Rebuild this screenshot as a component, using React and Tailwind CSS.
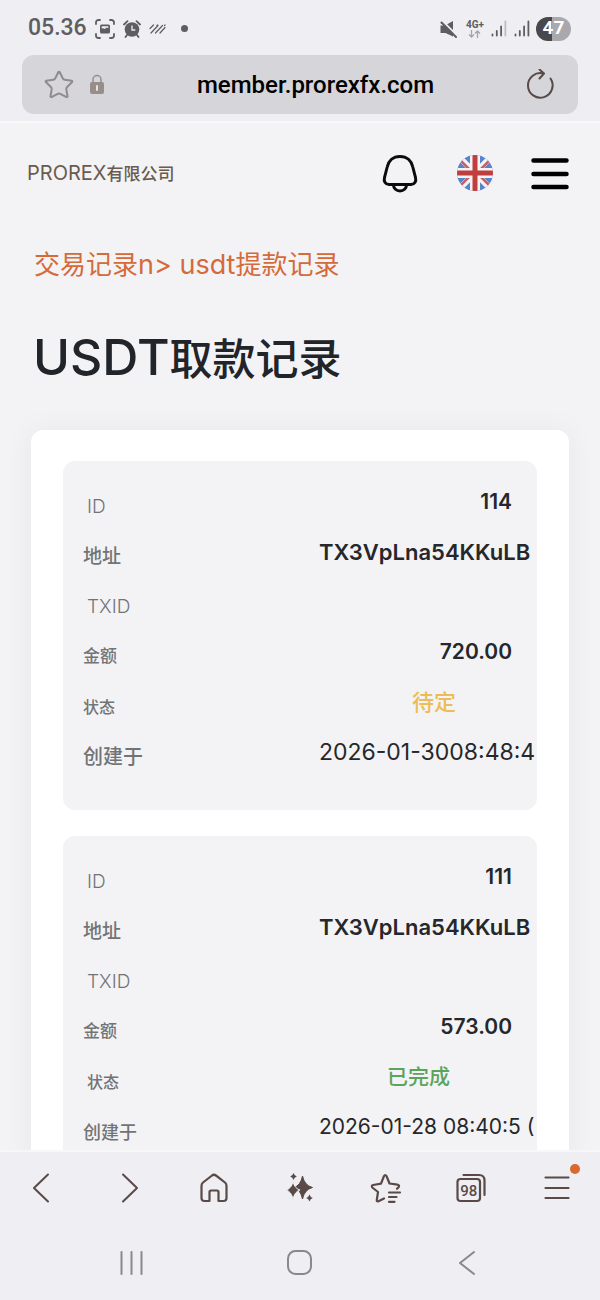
import React from 'react';
import { Star } from 'lucide-react';

const records = [
    {
        rows: [
            { label: 'ID', value: '114', type: 'latin' },
            { label: '地址', value: 'TX3VpLna54KKuLB', labelClass: 'text-[19px]', valueClass: 'text-[22px] font-semibold text-[#26272b]' },
            { label: 'TXID', value: '', type: 'latin' },
            { label: '金额', value: '720.00', labelClass: 'text-[17px]' },
            { label: '状态', value: '待定', labelClass: 'text-base', valueClass: 'pr-14 text-[22px] font-medium text-[#ecbd57]' },
            { label: '创建于', value: '2026-01-3008:48:4', labelClass: 'text-xl', valueClass: 'text-[23px] text-[#26272b]' },
        ],
    },
    {
        rows: [
            { label: 'ID', value: '111', type: 'latin' },
            { label: '地址', value: 'TX3VpLna54KKuLB', labelClass: 'text-[19px]', valueClass: 'text-[22px] font-semibold text-[#26272b]' },
            { label: 'TXID', value: '', type: 'latin' },
            { label: '金额', value: '573.00', labelClass: 'text-[17px]' },
            { label: '状态', value: '已完成', labelClass: 'pl-1 text-base', valueClass: 'pr-[62px] text-[21px] font-medium text-[#5ba45c]' },
            { label: '创建于', value: '2026-01-28 08:40:5 (', labelClass: 'text-[18px]', valueClass: 'text-[21px] text-[#26272b]' },
        ],
    },
];

const StatusBar = () => (
    <div className="flex h-[55px] shrink-0 items-center justify-between pr-[29px] pl-7 pt-[2px] text-[#5d5d62]">
        <div className="flex items-center">
            <span className="font-['Roboto',sans-serif] text-[23px] font-medium">05.36</span>
            <svg width="20" height="20" viewBox="0 0 20 20" className="ml-2" fill="none" stroke="currentColor" strokeWidth="1.8" strokeLinecap="round">
                <path d="M1 5V3.500A2.500 2.500 0 0 1 3.500 1H5M15 1h1.500A2.500 2.500 0 0 1 19 3.500V5M19 15v1.500a2.500 2.500 0 0 1-2.500 2.500H15M5 19H3.500A2.500 2.500 0 0 1 1 16.500V15" />
                <rect x="5" y="5.500" width="10" height="9" rx="1.500" fill="currentColor" stroke="none" />
                <path d="M6.700 9.600V7.200h6.600v2l-1.500-.8-2.300 1.700-1.300-.9z" fill="#efeef3" stroke="none" />
            </svg>
            <svg width="18" height="18" viewBox="0 0 18 18" className="ml-2">
                <circle cx="9" cy="9.500" r="7.300" fill="currentColor" />
                <path d="M1 4.500L4.500 1.200M17 4.500l-3.500-3.300M4 15l-1.500 2M14 15l1.500 2" stroke="currentColor" strokeWidth="1.800" strokeLinecap="round" />
                <path d="M9 5.500v4.500h3.300" stroke="#efeef3" strokeWidth="1.300" fill="none" />
            </svg>
            <svg width="18" height="10" viewBox="0 0 18 10" className="ml-2" stroke="currentColor" strokeWidth="1.200" strokeLinecap="round">
                <path d="M1 4.500L4.500 1M2 9l7-7.500M6.500 9l7-7.500M11 9l5-5.500" />
                <path d="M8 1.500l.5-.5M15.500 1.500l.5-.5" />
            </svg>
            <span className="ml-[14px] size-[7px] rounded-full bg-current" />
        </div>
        <div className="flex items-center">
            <svg width="18" height="18" viewBox="0 0 18 18">
                <path d="M0.500 5.500h4.500L13 1v15.500L5.500 13h-5z" fill="currentColor" />
                <path d="M2 0.500l16 16" stroke="#efeef3" strokeWidth="2" />
                <path d="M1.500 2.500l14.500 14.500" stroke="currentColor" strokeWidth="2" strokeLinecap="round" />
            </svg>
            <div className="ml-2 flex flex-col items-center">
                <span className="font-['Roboto',sans-serif] text-[10px] leading-[10px] font-bold">4G+</span>
                <svg width="13" height="8" viewBox="0 0 13 8" fill="none" stroke="#a5a5aa" strokeWidth="1.300">
                    <path d="M3.500 0v7M1 4.500L3.500 7 6 4.500M9.500 8V1M7 3.500L9.500 1 12 3.500" />
                </svg>
            </div>
            <svg width="16" height="17" viewBox="0 0 16 17" className="ml-[7px]" strokeWidth="1.800" strokeLinecap="round" stroke="currentColor">
                <path d="M1.500 14.500v1M5.800 11v4.500M10.100 6.500v9" />
                <path d="M14.400 1.500v14" stroke="#bdbdc2" />
            </svg>
            <svg width="16" height="17" viewBox="0 0 16 17" className="ml-[7px]" strokeWidth="1.800" strokeLinecap="round" stroke="currentColor">
                <path d="M1.500 14.500v1M5.800 11v4.500M10.100 6.500v9M14.400 1.500v14" />
            </svg>
            <span className="ml-[6px] flex h-6 w-[35px] items-center justify-center rounded-full bg-linear-to-r from-[#48484c] from-47% to-[#a9a9ad] to-47% font-['Roboto',sans-serif] text-[19px] font-bold text-white">
                47
            </span>
        </div>
    </div>
);

const AddressBar = () => (
    <div className="shrink-0 border-b-2 border-[#f9f9fb] px-[22px] pb-[7px]">
        <div className="flex h-[59px] items-center justify-between rounded-xl bg-[#d6d5da] pr-[22px] pl-[21px]">
            <div className="flex items-center gap-[14px]">
                <button aria-label="Bookmark" className="text-[#8f8b8e]">
                    <Star className="size-8" strokeWidth={1.5} />
                </button>
                <svg width="16" height="21" viewBox="0 0 16 21" className="text-[#978d8b]">
                    <path d="M4 9V5.500a4 4 0 0 1 8 0V9" fill="none" stroke="currentColor" strokeWidth="1.500" />
                    <rect x="1" y="8" width="14" height="12" rx="2" fill="currentColor" />
                    <path d="M8 12v4" stroke="#e4e2e5" strokeWidth="2" strokeLinecap="round" />
                </svg>
            </div>
            <span className="pl-[2px] font-['Roboto',sans-serif] text-[24px] font-medium text-black">member.prorexfx.com</span>
            <button aria-label="Reload">
                <svg width="32" height="32" viewBox="0 0 32 32" fill="none" stroke="#594a48" strokeWidth="2" strokeLinecap="round" strokeLinejoin="round">
                    <path d="M26.500 9.500A12.300 12.300 0 1 1 19.500 4.500" />
                    <path d="M15.500 0.500l4.500 4-4.500 5" />
                </svg>
            </button>
        </div>
    </div>
);

const SiteHeader = () => (
    <header className="flex items-center justify-between pt-[30px] pr-[31px] pl-[27px]">
        <a href="#home" className="text-[20px] text-[#6b5a4e]">
            PROREX<span className="text-[17px] font-medium">有限公司</span>
        </a>
        <div className="flex items-center">
            <button aria-label="Notifications">
                <svg width="36" height="40" viewBox="0 0 36 40" fill="none" stroke="#0b0b0b" strokeWidth="3" strokeLinejoin="round">
                    <path d="M18 3.500C11 3.500 6.500 8 5.200 14L2.500 24.500C1.500 28.500 3.500 31.500 7 31.500H29c3.500 0 5.500-3 4.500-7L30.800 14C29.500 8 25 3.500 18 3.500z" />
                    <path d="M11.500 32a6.500 6 0 0 0 13 0" />
                </svg>
            </button>
            <button aria-label="Language" className="ml-[39px]">
                <svg width="36" height="36" viewBox="0 0 36 36">
                    <clipPath id="flag">
                        <circle cx="18" cy="18" r="18" />
                    </clipPath>
                    <g clipPath="url(#flag)">
                        <rect width="36" height="36" fill="#5585cf" />
                        <path d="M0 0l36 36M36 0L0 36" stroke="#f7f3f5" strokeWidth="6" />
                        <path d="M3 5l12 12M21 19l12 12M33 5L21 17M15 19L3 31" stroke="#c4606a" strokeWidth="2.500" />
                        <path d="M18 0v36M0 18h36" stroke="#f7f3f5" strokeWidth="10" />
                        <path d="M18 0v36M0 18h36" stroke="#bf3f3c" strokeWidth="5" />
                    </g>
                </svg>
            </button>
            <button aria-label="Menu" className="ml-[38px]">
                <svg width="38" height="34" viewBox="0 0 38 34" stroke="#000" strokeWidth="4.500" strokeLinecap="round">
                    <path d="M2.500 4.500h33M2.500 18h33M2.500 31h33" />
                </svg>
            </button>
        </div>
    </header>
);

const Row = ({ label, value, type, labelClass = '', valueClass = 'text-[21px] font-semibold text-[#26272b]' }) => (
    <div className="flex h-[50px] items-center justify-between pr-[25px] pl-5">
        <dt className={`pt-[10px] text-[#737375] ${type === 'latin' ? 'pl-1 text-[19px] font-light' : 'font-medium'} ${labelClass}`}>
            {label}
        </dt>
        <dd className={`w-[45%] text-right whitespace-nowrap ${valueClass}`}>{value}</dd>
    </div>
);

const BrowserBar = () => (
    <nav className="grid h-[74px] shrink-0 grid-cols-7 place-items-center border-t-2 border-[#f7f7f9] text-[#594a48]">
        <button aria-label="Back">
            <svg width="32" height="32" viewBox="0 0 32 32" fill="none" stroke="currentColor" strokeWidth="2" strokeLinecap="round" strokeLinejoin="round">
                <path d="M21 2.500L7 16l14 13.500" />
            </svg>
        </button>
        <button aria-label="Forward">
            <svg width="32" height="32" viewBox="0 0 32 32" fill="none" stroke="currentColor" strokeWidth="2" strokeLinecap="round" strokeLinejoin="round">
                <path d="M10 2.500L24 16 10 29.500" />
            </svg>
        </button>
        <button aria-label="Home">
            <svg width="32" height="32" viewBox="0 0 32 32" fill="none" stroke="currentColor" strokeWidth="2.200" strokeLinejoin="round">
                <path d="M14 3.500Q16 2 18 3.500L27 10.500Q28.500 11.700 28.500 14V26Q28.500 29 25.500 29H20.500V20Q20.500 18.500 19 18.500H13Q11.500 18.500 11.500 20V29H6.500Q3.500 29 3.500 26V14Q3.500 11.700 5 10.500Z" />
            </svg>
        </button>
        <button aria-label="Assistant">
            <svg width="32" height="32" viewBox="0 0 32 32" fill="currentColor">
                <path d="M18.500 4Q20.500 13.500 28.500 15.500 20.500 17.500 18.500 27 16.500 17.500 10 15.500 16.500 13.500 18.500 4z" stroke="currentColor" strokeWidth="1" strokeLinejoin="round" />
                <path d="M9 9.500Q10.500 16.500 16 18 10.500 19.500 9 27.500 7.500 19.500 2 18 7.500 16.500 9 9.500z" stroke="#efeef3" strokeWidth="1" />
                <path d="M9.500 1Q10.300 3.700 12.800 4.500 10.300 5.300 9.500 8 8.700 5.300 6.200 4.500 8.700 3.700 9.500 1zM25.500 22.500Q26.300 25.200 28.800 26 26.300 26.800 25.500 29.500 24.700 26.800 22.200 26 24.700 25.200 25.500 22.500z" />
            </svg>
        </button>
        <button aria-label="Bookmarks">
            <svg width="32" height="32" viewBox="0 0 32 32" fill="none" stroke="currentColor" strokeWidth="2.200" strokeLinecap="round" strokeLinejoin="round">
                <path d="M14 26.500L8.500 29.300Q6.500 30 6.800 27.800L8 20 2.300 15.500Q1 13.500 3.200 13L11 11.700 14 4Q15.200 2 16.500 4L19.500 11.500 27.500 12.700Q30 13.300 28.500 15.200L27 16.800" />
                <path d="M19 20.500h11M19 25h7.500M19 29.800h5.500" />
            </svg>
        </button>
        <button aria-label="Tabs">
            <svg width="32" height="32" viewBox="0 0 32 32" fill="none" stroke="currentColor" strokeWidth="2.200" strokeLinecap="round">
                <rect x="2.500" y="7" width="22.500" height="22" rx="3" />
                <path d="M8.500 3H24q5.500 0 5.500 5.500V23" />
                <text x="13.800" y="23.500" textAnchor="middle" fontSize="15" fontWeight="500" fontFamily="Roboto, sans-serif" fill="currentColor" stroke="none">98</text>
            </svg>
        </button>
        <button aria-label="More" className="relative">
            <svg width="32" height="32" viewBox="0 0 32 32" stroke="currentColor" strokeWidth="2.200" strokeLinecap="round">
                <path d="M4.500 5.500h23M4.500 16h23M4.500 26h23" />
            </svg>
            <span className="absolute -top-2 -right-[7px] size-[10px] rounded-full bg-[#d9692f]" />
        </button>
    </nav>
);

const SystemNav = () => (
    <nav className="grid h-[76px] shrink-0 grid-cols-3 place-items-center px-12 pt-px text-[#88888d]">
        <button aria-label="Recent apps">
            <svg width="26" height="26" viewBox="0 0 26 26" stroke="currentColor" strokeWidth="2" strokeLinecap="round">
                <path d="M2.500 2v22M12.500 2v22M22.500 2v22" />
            </svg>
        </button>
        <button aria-label="Home screen">
            <svg width="28" height="28" viewBox="0 0 28 28" fill="none" stroke="currentColor" strokeWidth="2">
                <rect x="2" y="2" width="23" height="23" rx="7.500" />
            </svg>
        </button>
        <button aria-label="System back">
            <svg width="26" height="26" viewBox="0 0 26 26" fill="none" stroke="currentColor" strokeWidth="2" strokeLinecap="round" strokeLinejoin="round">
                <path d="M19 2L5 13l14 11" />
            </svg>
        </button>
    </nav>
);

const App = () => {
    return (
        <div className="flex h-screen flex-col bg-[#efeef3] font-['Inter','Noto_Sans_CJK_SC',sans-serif]">
            <StatusBar />
            <AddressBar />
            <main className="min-h-0 flex-1 overflow-y-auto bg-[#f3f3f5] [scrollbar-width:none]">
                <SiteHeader />
                <p className="mt-[52px] px-[34px] text-[27px] leading-10 text-[#d56a3a]">
                    <span className="text-[26px]">交易记录</span>n&gt; usdt<span className="text-[26px]">提款记录</span>
                </p>
                <h1 className="mt-[38px] px-[33px] text-[50px] leading-[68px] font-medium text-[#212429]">
                    USDT<span className="text-[43px]">取款记录</span>
                </h1>
                <section className="mx-[31px] mt-[37px] flex flex-col gap-[26px] rounded-xl bg-white px-8 py-[31px] shadow-[0_0_30px_rgba(0,0,0,0.05)]">
                    {records.map((record, i) => (
                        <dl key={i} className="overflow-hidden rounded-xl bg-[#f3f3f5] pt-4 pb-[33px]">
                            {record.rows.map((row) => (
                                <Row key={row.label} {...row} />
                            ))}
                        </dl>
                    ))}
                </section>
            </main>
            <BrowserBar />
            <SystemNav />
        </div>
    );
};

export default App;
